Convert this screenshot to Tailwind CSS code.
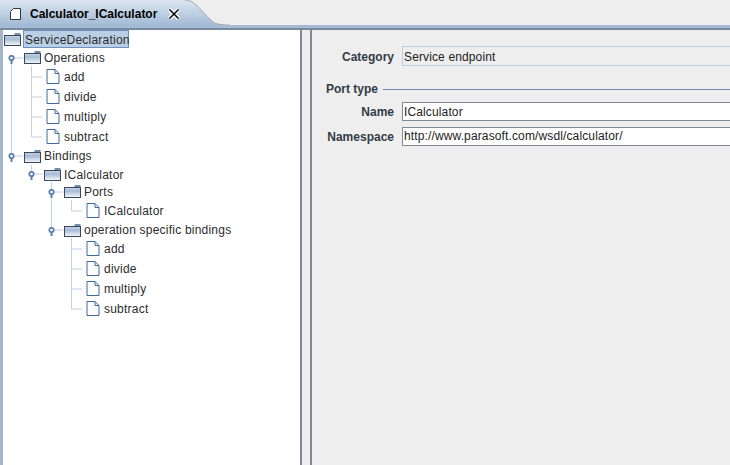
<!DOCTYPE html>
<html lang="en">
<head>
  <meta charset="UTF-8" />
  <title>Calculator_ICalculator</title>
  <script src="https://cdn.jsdelivr.net/npm/@tailwindcss/browser@4"></script>
</head>
<body class="bg-[#eeeeee] text-[#222222] font-['Liberation_Sans',Arial,sans-serif] text-[12px] overflow-hidden">
  <svg width="0" height="0" class="absolute">
    <defs>
      <linearGradient id="tabFill" x1="0" y1="0" x2="0" y2="1">
        <stop offset="0" stop-color="#dce6f0" />
        <stop offset="1" stop-color="#a3bbd6" />
      </linearGradient>
      <linearGradient id="folderFill" x1="0" y1="0" x2="0" y2="1">
        <stop offset="0" stop-color="#c8d6e5" />
        <stop offset=".35" stop-color="#a6bbd4" />
        <stop offset="1" stop-color="#f7f9fc" />
      </linearGradient>
      <symbol id="folder" viewBox="0 0 17 13">
        <path d="M10 2 L11 0 H16.5 V2 Z" fill="#6f8fb0" />
        <rect x=".5" y="2.5" width="16" height="10" fill="url(#folderFill)" stroke="#39485a" />
      </symbol>
      <symbol id="leaf" viewBox="0 0 14 15">
        <path d="M1 .5 H9 L13 4.5 V14.5 H1 Z" fill="#ffffff" stroke="#3f6a9c" />
        <path d="M9 .5 V4.5 H13" fill="none" stroke="#3f6a9c" />
      </symbol>
      <symbol id="handle" viewBox="0 0 7 9" overflow="visible">
        <path d="M3.5 5 V9" stroke="#5f80ad" stroke-width="2" />
        <circle cx="3.5" cy="3" r="2.2" fill="#ffffff" stroke="#5f80ad" stroke-width="1.8" />
      </symbol>
    </defs>
  </svg>

  <div class="w-[730px] h-[465px] flex flex-col">
    <!-- tab strip -->
    <div class="relative h-[25px] shrink-0">
      <svg class="absolute left-0 top-0" width="730" height="25">
        <path d="M0 25 V0 H185 C195 0 200 10 213 22 C216 24 220 25 230 25 Z" fill="url(#tabFill)" />
        <path d="M185 0 C195 0 200 10 213 22 C216 24 220 25 230 25" fill="none" stroke="#a9a9a9" />
      </svg>
      <div class="relative flex items-center h-[27px] pl-[10px]">
        <svg width="11" height="12" viewBox="0 0 11 12">
          <path d="M3.5 .5 H10.5 V11.5 H.5 V3.5 Z" fill="#ffffff" stroke="#33383f" />
        </svg>
        <span class="ml-[9px] font-bold text-black">Calculator_ICalculator</span>
        <svg class="ml-[11px]" width="12" height="12" viewBox="0 0 12 12">
          <path d="M1.5 1.5 L10.5 10.5 M10.5 1.5 L1.5 10.5" stroke="#ffffff" stroke-width="4" />
          <path d="M1.5 1.5 L10.5 10.5 M10.5 1.5 L1.5 10.5" stroke="#000000" stroke-width="1.5" />
        </svg>
      </div>
    </div>
    <div class="h-[5px] shrink-0 bg-[#a3bbd6] border-b-2 border-[#7a8a9c]"></div>

    <div class="flex flex-1 min-h-0">
      <!-- tree -->
      <div class="relative w-[302px] shrink-0 bg-white border-l-[3px] border-l-[#a3b5cb] border-r-2 border-r-[#7d8b99]">
        <svg class="absolute left-[-3px] top-[-30px]" width="302" height="340" fill="none">
          <g stroke="#c0d2e6">
            <path d="M11.5 58 V156 M31.5 66 V137 H42 M31.5 77 H42 M31.5 97 H42 M31.5 117 H42" />
            <path d="M31.5 165 V174 M51.5 182 V192 M51.5 192 V230 M71.5 200 V211 H82 M71.5 238 V309 H82 M71.5 249 H82 M71.5 269 H82 M71.5 289 H82" />
            <path d="M14 58 H23 M14 156 H23 M34 174 H43 M54 192 H63 M54 230 H63" />
          </g>
        </svg>
        <svg class="absolute left-[5px] top-[25px] w-[7px] h-[9px]"><use href="#handle" /></svg>
        <svg class="absolute left-[5px] top-[123px] w-[7px] h-[9px]"><use href="#handle" /></svg>
        <svg class="absolute left-[25px] top-[141px] w-[7px] h-[9px]"><use href="#handle" /></svg>
        <svg class="absolute left-[45px] top-[159px] w-[7px] h-[9px]"><use href="#handle" /></svg>
        <svg class="absolute left-[45px] top-[197px] w-[7px] h-[9px]"><use href="#handle" /></svg>

        <div class="relative flex flex-col pl-px text-[#2c2c2c] tracking-[0.22px]">
          <div class="flex items-center h-[18px]">
            <svg class="w-[17px] h-[13px]"><use href="#folder" /></svg>
            <span class="ml-[2px] w-[106px] h-[18px] leading-[18px] pl-px bg-[#b8cfe5] border border-[#6f8fc0]">ServiceDeclaration</span>
          </div>
          <div class="flex items-center h-[19px] pl-[20px]">
            <svg class="w-[17px] h-[13px]"><use href="#folder" /></svg><span class="ml-[3px]">Operations</span>
          </div>
          <div class="flex items-center h-[19px] pl-[42px]">
            <svg class="w-[14px] h-[15px] -mt-px"><use href="#leaf" /></svg><span class="ml-[4px]">add</span>
          </div>
          <div class="flex items-center h-[21px] pl-[42px]">
            <svg class="w-[14px] h-[15px] -mt-px"><use href="#leaf" /></svg><span class="ml-[4px]">divide</span>
          </div>
          <div class="flex items-center h-[20px] pl-[42px]">
            <svg class="w-[14px] h-[15px] -mt-px"><use href="#leaf" /></svg><span class="ml-[4px]">multiply</span>
          </div>
          <div class="flex items-center h-[19px] pl-[42px]">
            <svg class="w-[14px] h-[15px] -mt-px"><use href="#leaf" /></svg><span class="ml-[4px]">subtract</span>
          </div>
          <div class="flex items-center h-[20px] pl-[20px]">
            <svg class="w-[17px] h-[13px]"><use href="#folder" /></svg><span class="ml-[3px]">Bindings</span>
          </div>
          <div class="flex items-center h-[17px] pl-[40px]">
            <svg class="w-[17px] h-[13px]"><use href="#folder" /></svg><span class="ml-[3px]">ICalculator</span>
          </div>
          <div class="flex items-center h-[17px] pl-[60px]">
            <svg class="w-[17px] h-[13px]"><use href="#folder" /></svg><span class="ml-[3px]">Ports</span>
          </div>
          <div class="flex items-center h-[21px] pl-[82px]">
            <svg class="w-[14px] h-[15px] -mt-px"><use href="#leaf" /></svg><span class="ml-[4px]">ICalculator</span>
          </div>
          <div class="flex items-center h-[18px] pl-[60px]">
            <svg class="w-[17px] h-[13px]"><use href="#folder" /></svg><span class="ml-[3px]">operation specific bindings</span>
          </div>
          <div class="flex items-center h-[20px] pl-[82px]">
            <svg class="w-[14px] h-[15px] -mt-px"><use href="#leaf" /></svg><span class="ml-[4px]">add</span>
          </div>
          <div class="flex items-center h-[20px] pl-[82px]">
            <svg class="w-[14px] h-[15px] -mt-px"><use href="#leaf" /></svg><span class="ml-[4px]">divide</span>
          </div>
          <div class="flex items-center h-[20px] pl-[82px]">
            <svg class="w-[14px] h-[15px] -mt-px"><use href="#leaf" /></svg><span class="ml-[4px]">multiply</span>
          </div>
          <div class="flex items-center h-[20px] pl-[82px]">
            <svg class="w-[14px] h-[15px] -mt-px"><use href="#leaf" /></svg><span class="ml-[4px]">subtract</span>
          </div>
        </div>
      </div>

      <!-- splitter -->
      <div class="w-[8px] shrink-0"></div>

      <!-- properties -->
      <div class="flex-1 min-w-0 border-l-2 border-l-[#7d8b99] pl-[14px] pt-[16px] overflow-hidden">
        <div class="flex items-center h-[20px]">
          <span class="w-[68px] pt-px text-right font-bold text-[#333c46]">Category</span>
          <div class="ml-[8px] flex-1 h-[20px] leading-[20px] pl-px tracking-[0.13px] bg-[#eeeeee] border-y border-l border-[#b8cfe5]">Service endpoint</div>
        </div>
        <div class="flex items-center h-[16px] mt-[15px]">
          <span class="font-bold text-[#333c46]">Port type</span>
          <div class="ml-[5px] flex-1 h-px bg-[#6f84b5]"></div>
        </div>
        <div class="flex items-center h-[19px] mt-[5px]">
          <span class="w-[68px] pt-px text-right font-bold text-[#333c46]">Name</span>
          <div class="ml-[8px] flex-1 h-[19px] leading-[19px] pl-px tracking-[0.13px] bg-white border-y border-l border-[#7d8b99]">ICalculator</div>
        </div>
        <div class="flex items-center h-[19px] mt-[6px]">
          <span class="w-[68px] text-right font-bold text-[#333c46]">Namespace</span>
          <div class="ml-[8px] flex-1 h-[19px] leading-[17px] pl-px tracking-[0.13px] bg-white border-y border-l border-[#7d8b99]">http://www.parasoft.com/wsdl/calculator/</div>
        </div>
      </div>
    </div>
  </div>
</body>
</html>
